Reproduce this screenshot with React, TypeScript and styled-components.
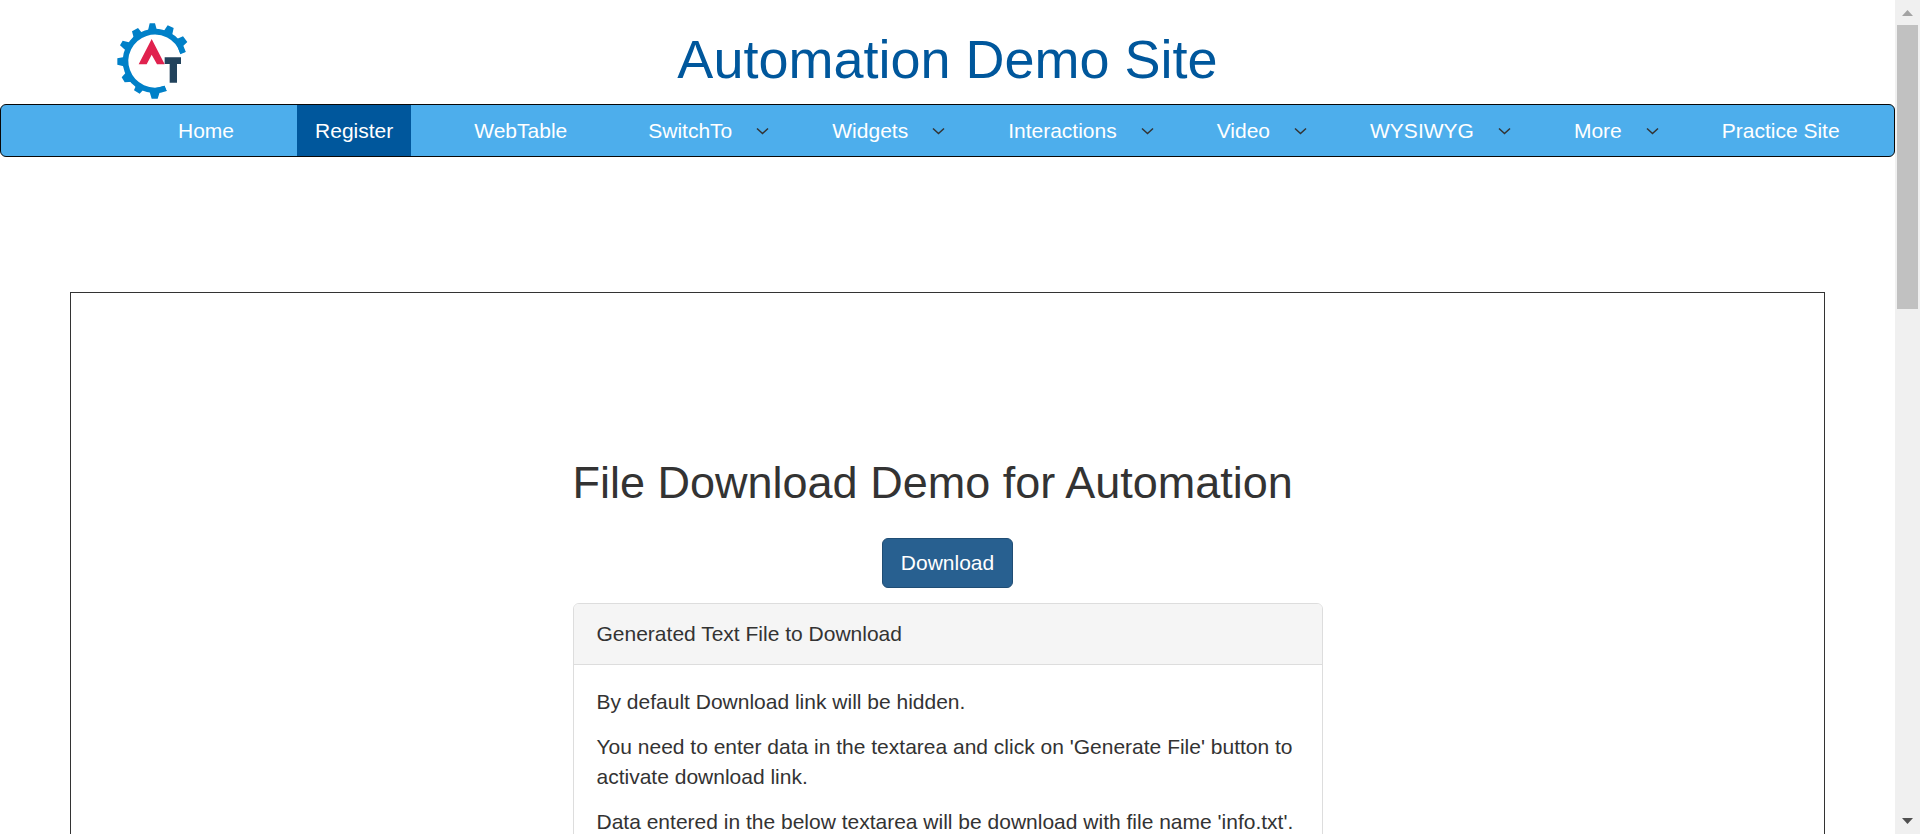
import React from "react";
import styled, { createGlobalStyle, css } from "styled-components";

const GlobalStyle = createGlobalStyle`
  *, *::before, *::after {
    box-sizing: border-box;
  }
  body {
    margin: 0;
    background: #fff;
    color: #333;
    font-family: "Liberation Sans", Arial, sans-serif;
    font-size: 21px;
    line-height: 30px;
  }
`;

const Window = styled.div`
  display: flex;
  height: 100vh;
  overflow: hidden;
`;

const Page = styled.div`
  flex: 1;
  min-width: 0;
  overflow: hidden;
`;

const Header = styled.header`
  display: grid;
  grid-template-columns: 1fr auto 1fr;
  align-items: start;
  height: 104px;
  padding: 23px 117px 0;
`;

const LogoLink = styled.a`
  display: block;
  width: 71px;
  height: 76px;

  svg {
    display: block;
  }
`;

const SiteTitle = styled.h1`
  margin: 6px 0 0;
  color: #00579c;
  font-size: 54px;
  font-weight: 400;
  line-height: 60px;
`;

const NavBar = styled.nav`
  border: 1px solid #080808;
  border-radius: 6px;
  background: #4daeec;
`;

const NavList = styled.ul`
  display: flex;
  gap: 45px;
  margin: 0;
  padding: 0 0 0 159px;
  list-style: none;
  white-space: nowrap;
`;

const NavItem = styled.li`
  display: flex;
  align-items: center;
`;

const NavLink = styled.a<{ $active?: boolean }>`
  padding: 11px 18px 10px;
  color: #fff;
  text-decoration: none;

  ${({ $active }) =>
    $active &&
    css`
      background: #00579c;
    `}
`;

const Chevron = styled.svg`
  width: 13px;
  height: 8px;
  margin-left: 6px;
  fill: none;
  stroke: #333;
  stroke-width: 1.5;
`;

const Content = styled.main`
  max-width: 1755px;
  min-height: 1200px;
  margin: 135px auto 0;
  padding: 165px 20px 0;
  border: 1px solid #333;
`;

const Column = styled.div`
  display: flex;
  flex-direction: column;
  max-width: 750px;
  margin: 0 auto;
`;

const Heading = styled.h2`
  margin: 0 0 30px;
  font-size: 45px;
  font-weight: 400;
  line-height: 50px;
`;

const DownloadButton = styled.button`
  align-self: center;
  height: 50px;
  padding: 0 18px;
  border: 1px solid #204d74;
  border-radius: 6px;
  background: #286090;
  color: #fff;
  font: inherit;
`;

const Panel = styled.section`
  margin-top: 15px;
  border: 1px solid #ddd;
  border-radius: 6px;
`;

const PanelHeading = styled.div`
  padding: 15px 23px;
  border-bottom: 1px solid #ddd;
  border-radius: 5px 5px 0 0;
  background: #f5f5f5;
`;

const PanelBody = styled.div`
  padding: 22px 23px;

  p {
    margin: 0 0 15px;
  }
`;

const ScrollTrack = styled.div`
  display: flex;
  flex-direction: column;
  align-items: center;
  width: 25px;
  background: #f0f0f0;
`;

const ScrollArrow = styled.svg<{ $dim?: boolean }>`
  flex: none;
  width: 25px;
  height: 25px;
  fill: ${({ $dim }) => ($dim ? "#a3a3a3" : "#505050")};
`;

const ScrollLane = styled.div`
  flex: 1;
  width: 21px;
`;

const ScrollThumb = styled.div`
  height: 284px;
  background: #c1c1c1;
`;

const items: { label: string; menu?: boolean; active?: boolean }[] = [
  { label: "Home" },
  { label: "Register", active: true },
  { label: "WebTable" },
  { label: "SwitchTo", menu: true },
  { label: "Widgets", menu: true },
  { label: "Interactions", menu: true },
  { label: "Video", menu: true },
  { label: "WYSIWYG", menu: true },
  { label: "More", menu: true },
  { label: "Practice Site" },
];

const Logo = () => (
  <svg width="71" height="76" viewBox="80 38 213 228" aria-hidden="true">
    <path
      d="M278 127A88 88 0 1 0 226 234"
      fill="none"
      stroke="#0080c8"
      strokeWidth="17"
    />
    <g fill="#0080c8">
      <path d="M172 64L178 39H194L201 64Z" />
      <path d="M218 66L232 45L250 53L245 76Z" />
      <path d="M254 88L278 78L291 95L276 109L286 125L270 132Z" />
      <path d="M132 90L125 63L143 53L160 74Z" />
      <path d="M108 122L89 105L97 91L122 97Z" />
      <path d="M106 139L81 144V163L106 169Z" />
      <path d="M109 184L94 201L103 216L129 214Z" />
      <path d="M141 216L131 240L148 250L166 230Z" />
      <path d="M176 238L184 265H202L209 243L229 242L222 226Z" />
    </g>
    <path d="M184 86L223 162H200L184 133L169 162H145Z" fill="#e0224e" />
    <path d="M223 141H272V161H260V217H238V161H223Z" fill="#22435c" />
  </svg>
);

export default function App() {
  return (
    <>
      <GlobalStyle />
      <Window>
        <Page>
          <Header>
            <LogoLink href="#" aria-label="Home page">
              <Logo />
            </LogoLink>
            <SiteTitle>Automation Demo Site</SiteTitle>
          </Header>
          <NavBar>
            <NavList>
              {items.map(({ label, menu, active }) => (
                <NavItem key={label}>
                  <NavLink href="#" $active={active}>
                    {label}
                  </NavLink>
                  {menu && (
                    <Chevron viewBox="0 0 13 8" aria-hidden="true">
                      <path d="M1 1.5L6.500 6.5L12 1.5" />
                    </Chevron>
                  )}
                </NavItem>
              ))}
            </NavList>
          </NavBar>
          <Content>
            <Column>
              <Heading>File Download Demo for Automation</Heading>
              <DownloadButton type="button">Download</DownloadButton>
              <Panel>
                <PanelHeading>Generated Text File to Download</PanelHeading>
                <PanelBody>
                  <p>By default Download link will be hidden.</p>
                  <p>
                    You need to enter data in the textarea and click on
                    'Generate File' button to activate download link.
                  </p>
                  <p>
                    Data entered in the below textarea will be download with
                    file name 'info.txt'.
                  </p>
                </PanelBody>
              </Panel>
            </Column>
          </Content>
        </Page>
        <ScrollTrack aria-hidden="true">
          <ScrollArrow $dim viewBox="0 0 25 25">
            <path d="M7 16L12.500 10L18 16Z" />
          </ScrollArrow>
          <ScrollLane>
            <ScrollThumb />
          </ScrollLane>
          <ScrollArrow viewBox="0 0 25 25">
            <path d="M7 9L12.500 15L18 9Z" />
          </ScrollArrow>
        </ScrollTrack>
      </Window>
    </>
  );
}
